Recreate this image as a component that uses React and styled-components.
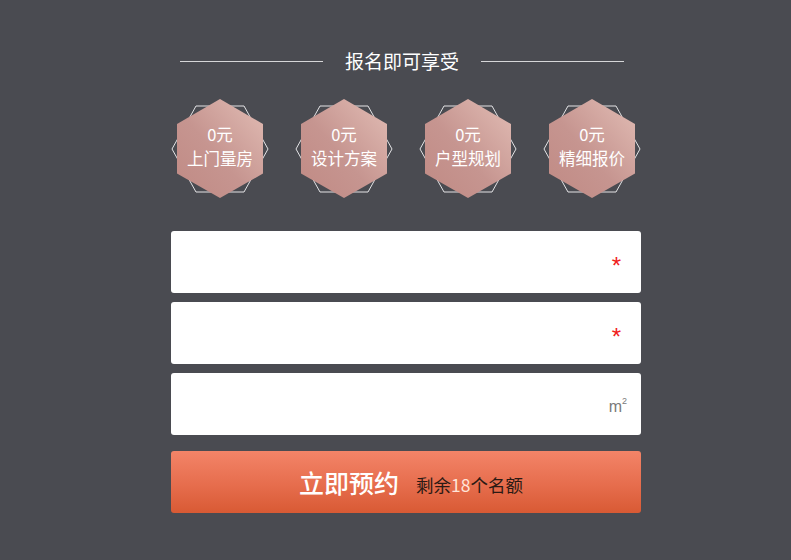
import React from 'react';
import styled, { createGlobalStyle } from 'styled-components';

const GlobalStyle = createGlobalStyle`
    html, body {
        margin: 0;
        padding: 0;
        background: #4a4b51;
    }
    body {
        font-family: "Noto Sans CJK SC", "Noto Sans", sans-serif;
    }
`;

const Page = styled.div`
    width: 791px;
    height: 560px;
    box-sizing: border-box;
    padding: 47px 0 0 171px;
    background: #4a4b51;
`;

const Panel = styled.div`
    width: 470px;
`;

const TitleRow = styled.div`
    display: flex;
    align-items: center;
    gap: 22px;
    margin: 0 17px 0 9px;
    height: 28px;
`;

const TitleLine = styled.div`
    flex: 1;
    height: 1px;
    background: #d6d6d8;
`;

const Title = styled.div`
    color: #ffffff;
    font-size: 19px;
    line-height: 28px;
`;

const PerkRow = styled.div`
    display: flex;
    justify-content: space-between;
    margin-top: 24px;
`;

const Perk = styled.div`
    position: relative;
    width: 98px;
    height: 100px;
    display: flex;
    flex-direction: column;
    align-items: center;
    justify-content: center;
`;

const PerkShape = styled.svg`
    position: absolute;
    left: 0;
    top: 0;
`;

const PerkText = styled.div`
    position: relative;
    color: #ffffff;
    font-size: 16.5px;
    line-height: 24px;
    text-align: center;
    margin-top: -7px;
`;

const Form = styled.div`
    display: flex;
    flex-direction: column;
    gap: 9px;
    margin-top: 32px;
`;

const Field = styled.div`
    height: 62px;
    background: #ffffff;
    border-radius: 3px;
    display: flex;
    align-items: center;
    justify-content: flex-end;
    padding-right: ${props => props.pad}px;
`;

const Required = styled.span`
    color: #f0201c;
    font-family: "Liberation Sans", sans-serif;
    font-size: 24px;
    line-height: 24px;
    margin-top: 8px;
`;

const Unit = styled.span`
    color: #7a7a7a;
    font-family: "Liberation Sans", sans-serif;
    font-size: 16px;
    margin-top: 4px;

    sup {
        font-size: 9px;
        vertical-align: 8px;
    }
`;

const SubmitButton = styled.div`
    margin-top: 16px;
    height: 62px;
    border-radius: 3px;
    background: linear-gradient(to bottom, #f38468 0%, #e66d4d 55%, #d85a34 100%);
    display: flex;
    align-items: center;
    justify-content: center;
    gap: 17px;
    padding-left: 10px;
`;

const ButtonLabel = styled.span`
    color: #ffffff;
    font-size: 25px;
    font-weight: 500;
`;

const Remain = styled.span`
    color: #2b1a14;
    font-size: 17.5px;
    margin-top: 4px;

    b {
        font-weight: normal;
        color: #ffe4d8;
    }
`;

const perks = ['上门量房', '设计方案', '户型规划', '精细报价'];

const Hexagon = ({ id }) => (
    <PerkShape width="98" height="100" viewBox="0 0 98 100">
        <defs>
            <linearGradient id={id} x1="1" y1="0" x2="0" y2="1">
                <stop offset="0%" stopColor="#e2bdb5" />
                <stop offset="55%" stopColor="#c69590" />
                <stop offset="100%" stopColor="#c08a84" />
            </linearGradient>
        </defs>
        <polygon points="25,7 73,7 97,50 73,93 25,93 1,50" fill="none" stroke="#e4e4e6" strokeWidth="1" />
        <polygon points="49,0 92,25 92,74.5 49,99 6,74.5 6,25" fill={`url(#${id})`} />
    </PerkShape>
);

export default function App() {
    return (
        <Page>
            <GlobalStyle />
            <Panel>
                <TitleRow>
                    <TitleLine />
                    <Title>报名即可享受</Title>
                    <TitleLine />
                </TitleRow>
                <PerkRow>
                    {perks.map((name, i) => (
                        <Perk key={name}>
                            <Hexagon id={`hexfill${i}`} />
                            <PerkText>0元<br />{name}</PerkText>
                        </Perk>
                    ))}
                </PerkRow>
                <Form>
                    <Field pad={20}><Required>*</Required></Field>
                    <Field pad={20}><Required>*</Required></Field>
                    <Field pad={14}><Unit>m<sup>2</sup></Unit></Field>
                </Form>
                <SubmitButton>
                    <ButtonLabel>立即预约</ButtonLabel>
                    <Remain>剩余<b>18</b>个名额</Remain>
                </SubmitButton>
            </Panel>
        </Page>
    );
}
